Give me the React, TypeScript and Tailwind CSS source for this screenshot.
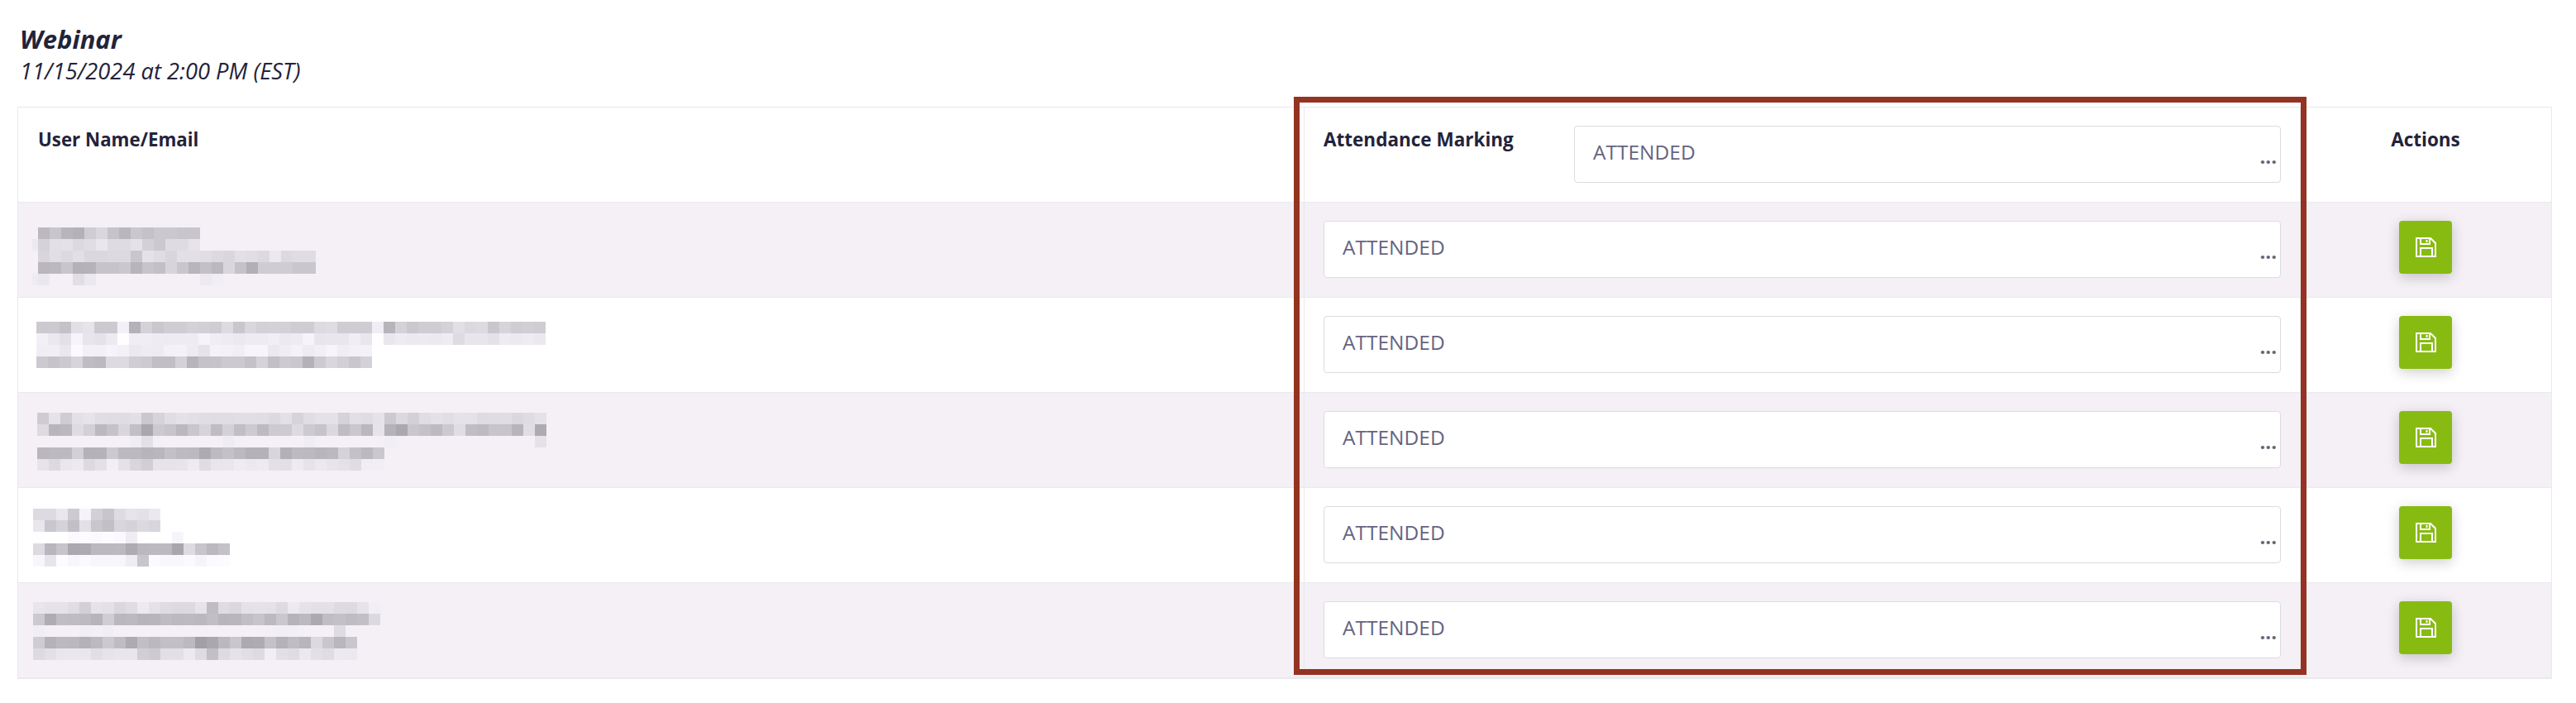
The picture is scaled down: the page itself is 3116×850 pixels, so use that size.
const rows = [
  {
    top: 30,
    left: 24,
    lines: [
      { half: "", cells: "bb c8 b8 b4 cf d9 c6 b9 ca c4 cb cb c8 c8" },
      { half: "ec", cells: "d5 e2 e4 dc e0 e9 de de e4 d3 cb de de e6" },
      { half: "", cells: "d8 e1 dc e2 da da dc dc c9 e4 df d8 e2 e2 e0 dc d9 e2 e0 dc eb dc df df" },
      { half: "", cells: "b9 bb c8 b4 b5 c6 c6 ca b7 c7 c2 d7 c9 b8 c3 bb d9 c5 b2 cf cf cf c9 c9" },
      { half: "ee", cells: "ea - - e1 eb - - - - - - - - - ec f1" },
    ],
  },
  {
    top: 29,
    left: 22,
    lines: [
      { half: "", cells: "cc cc c4 e2 e6 cc cc f3 b4 d4 c9 cf cf d4 d2 cf dd c9 d9 d3 d4 d3 cf cf dd df cf cf cf f0 b7 d4 ca cf cf d4 e2 db dd c9 d6 cf d1 cf" },
      { half: "", cells: "f2 eb e3 f7 e8 e5 ed ff f0 f0 ee ed ee ee f6 f0 ee eb ee ee f1 ec ee f6 e8 e9 e9 f0 e9 ff e9 ee ec ed ec ee de e8 e8 e4 ee ec ee eb" },
      { half: "", cells: "f0 f1 ea fc f3 f3 f6 f3 eb ee ed f3 f4 ee e6 f4 f3 f1 f7 f7 eb f0 f4 ee f2 f7 f0 f3 f4" },
      { half: "", cells: "cc c6 cc d7 bf bc dd dd d0 cd c1 c1 d4 b7 c5 c6 cc cc c4 d5 c2 cd ca b4 cd d9 d2 c9 d4" },
    ],
  },
  {
    top: 24,
    left: 23,
    lines: [
      { half: "", cells: "ce e5 cf e3 e6 e0 df df e2 ca d6 e0 e4 e2 e0 df df e1 e1 e0 dc e3 d6 e0 e4 e4 d5 e2 df e5 cc db d3 e0 e4 e1 e5 e4 de df e0 da df e4" },
      { half: "", cells: "dd b8 bb de d3 bb c5 d8 c2 aa cc c7 bb c9 d6 bf d4 c1 cd bd cd cd dd cd c6 db bf ca ba e6 b5 ab c9 c4 bd cc e0 c0 bd c7 c7 b7 e0 ad" },
      { half: "", cells: "- - - - - - - - f0 e3 - - - - - - ef - - - - - - f0 - - - - - - f1 - - - - - - - - - - - - e4" },
      { half: "", cells: "b9 bc bc d3 b4 b5 cc bc bc b7 b9 c3 bd bc ad bd c4 bc b4 b4 d8 b3 bd bc b8 bb d5 c4 bc ca" },
      { half: "", cells: "e6 dc e9 ec dc e3 f1 e4 d8 d1 e6 e6 e7 ed df e8 e9 ee eb ed e3 e2 ed e6 eb e7 e4 df f0 f1" },
    ],
  },
  {
    top: 25,
    left: 18,
    lines: [
      { half: "", cells: "dd dd e9 cd f6 d3 c8 de e6 e4 eb" },
      { half: "", cells: "e9 c9 d5 c2 e3 c9 c2 d8 d5 dc d8" },
      { half: "", cells: "- - - fb fd fb fd fb ef - - - f7" },
      { half: "", cells: "dd b9 c7 ab ad bb bb bc ae bb bc bc a9 de c8 bb c4" },
      { half: "", cells: "f8 e7 fd f8 fb f8 f8 f8 ef c8 fc f9 f9 fc f6 fc fd" },
    ],
  },
  {
    top: 23,
    left: 18,
    lines: [
      { half: "", cells: "e8 e5 e5 df d2 e5 e3 da df ec e4 de dc dc e6 bf de da e4 e5 e4 dd ec e5 e3 e3 dd dd e6 f1" },
      { half: "", cells: "cc af c0 bf bd b7 d0 ba bc b7 b8 bf bc bd bb c1 b8 b9 c1 c7 bc ca b6 bc ac c0 c3 bf c2 dc" },
      { half: "", cells: "f1 - - - f1 - f1 - - - - - - - - - - - - - f2 f1 f2 f3 - - de" },
      { half: "", cells: "cf b5 bc bb b4 bc cc bf ad c1 bb c2 c2 bc a2 aa bb c9 ac ae c4 b5 bf b8 dc c9 b9 c9" },
      { half: "", cells: "dd e2 e9 e9 e9 e1 e6 e8 e8 d1 cd e2 e2 ec de c2 dd e5 e1 dd f1 e2 df eb e2 df ec eb" },
    ],
  },
];

// the blurred names are just greys with a slight purple cast
const tint = (c: string) => {
  const v = parseInt(c, 16);
  return `rgb(${v}, ${Math.max(v - 2, 0)}, ${Math.min(v + 4, 255)})`;
};

const Mosaic = ({ top, left, lines }: (typeof rows)[number]) => (
  <div className="flex flex-col" style={{ paddingTop: top, paddingLeft: left }}>
    {lines.map((line, i) => (
      <div key={i} className="flex h-[14px]">
        {line.half ? (
          <span className="h-full w-[7px] -ml-[7px]" style={{ background: tint(line.half) }} />
        ) : null}
        {line.cells.split(" ").map((c, j) => (
          <span
            key={j}
            className="h-full w-[14px]"
            style={{ background: c === "-" ? "transparent" : tint(c) }}
          />
        ))}
      </div>
    ))}
  </div>
);

const AttendanceSelect = ({ className }: { className: string }) => (
  <div
    className={`relative h-[69px] rounded-[4px] border border-[#dcdcdf] bg-white pl-[22px] pt-[13px] text-[24.5px] font-medium leading-[36px] text-[#64647f] ${className}`}
  >
    ATTENDED
    <span className="absolute bottom-[13px] right-[4px] text-[24px] font-bold">...</span>
  </div>
);

const SaveIcon = () => (
  <svg width="25" height="24" viewBox="0 0 25 24" fill="none" stroke="white" strokeWidth="2">
    <path d="M1 1H18L24 7V23H1Z" />
    <path d="M6 1V8H17V1" />
    <path d="M13.5 3V6" />
    <path d="M6 23V13H20V23" />
  </svg>
);

export default function App() {
  return (
    <div className="min-h-[850px] bg-white pl-[21px] pr-[29px] pt-[28px] font-['Open_Sans',sans-serif] text-[#23233a]">
      <div className="pl-[3px]">
        <h1 className="text-[31px] font-bold italic leading-[39px]">Webinar</h1>
        <p className="text-[27.3px] italic leading-[38px]">11/15/2024 at 2:00 PM (EST)</p>
      </div>

      <div className="relative mt-[24px] border border-[#e9e9ee]">
        <div className="grid h-[115px] grid-cols-[1555px_1205px_1fr] border-b border-[#e9e9ee]">
          <div className="px-[24px] pt-[21px] text-[22.3px] font-bold leading-[36px]">User Name/Email</div>
          <div className="flex border-l border-[#e9e9ee] pl-[23px] pr-[23px] pt-[21px]">
            <div className="w-[303px] text-[22.5px] font-bold leading-[36px]">Attendance Marking</div>
            <AttendanceSelect className="mt-[1px] flex-1" />
          </div>
          <div className="border-l border-[#e9e9ee] pr-[1px] pt-[21px] text-center text-[22.5px] font-bold leading-[36px]">Actions</div>
        </div>

        {rows.map((row, i) => (
          <div
            key={i}
            className={`grid h-[115px] grid-cols-[1555px_1205px_1fr] border-b border-[#e9e9ee] last:border-b-0 ${i % 2 === 0 ? "bg-[#f4f0f6]" : "bg-white"}`}
          >
            <Mosaic {...row} />
            <div className="border-l border-[#e9e9ee] px-[23px] pt-[22px]">
              <AttendanceSelect className="w-full" />
            </div>
            <div className="flex justify-center border-l border-[#e9e9ee] pr-[1px] pt-[22px]">
              <button
                type="button"
                className="flex size-[64px] items-center justify-center rounded-[4px] bg-[#88bb12] shadow-[0_4px_16px_rgba(0,0,0,0.2)]"
              >
                <SaveIcon />
              </button>
            </div>
          </div>
        ))}

        <div className="pointer-events-none absolute -top-[13px] left-[1543px] h-[699px] w-[1225px] border-[7px] border-[#943321]" />
      </div>
    </div>
  );
}
